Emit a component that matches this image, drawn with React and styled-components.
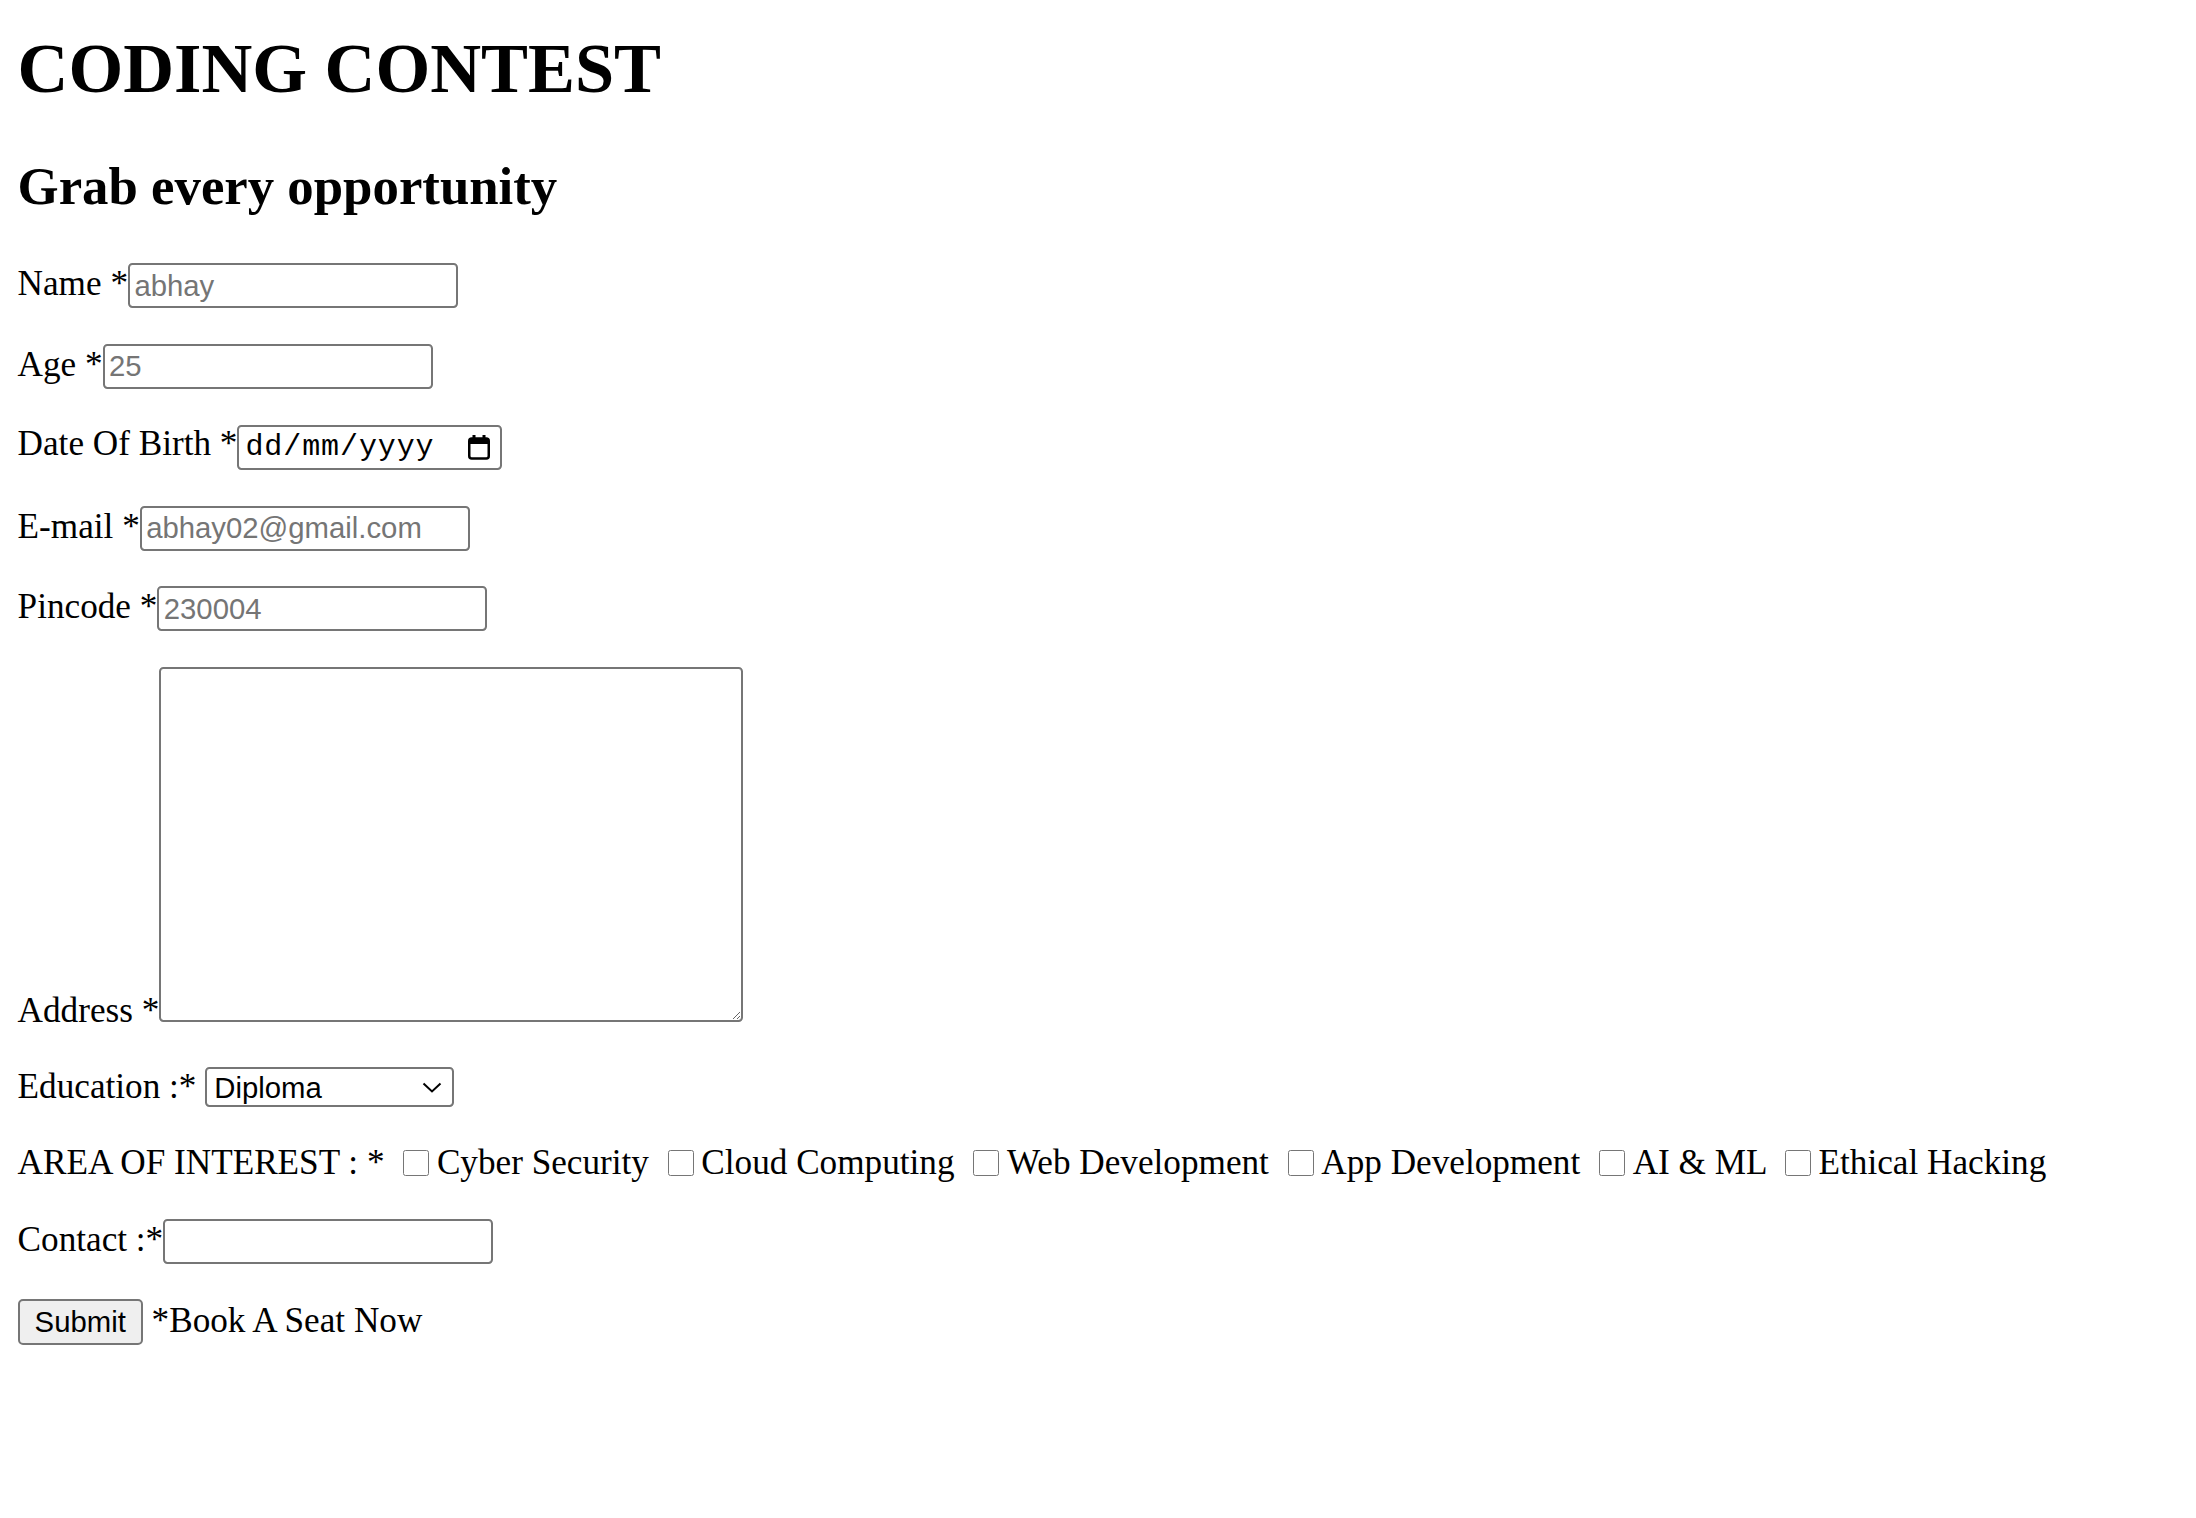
import React from "react";
import styled, { createGlobalStyle } from "styled-components";

const GlobalStyle = createGlobalStyle`
  body {
    margin: 0;
    background: #fff;
    color: #000;
    font-family: "Liberation Serif", "Times New Roman", serif;
    font-size: 35.2px;
  }
`;

const Page = styled.main`
  padding: 0 17.6px;
`;

const Title = styled.h1`
  font-size: 70.4px;
  font-weight: bold;
  margin: 27.5px 0 47.2px;
`;

const Subtitle = styled.h2`
  font-size: 52.8px;
  font-weight: bold;
  margin: 47.2px 0 47.5px;
`;

const Row = styled.p`
  margin: 35.8px 0;
`;

const fieldBase = `
  box-sizing: border-box;
  border: 2px solid #767676;
  border-radius: 4.4px;
  background: #fff;
  color: #000;
  font-family: "Liberation Sans", Arial, sans-serif;
  font-size: 29.3px;
`;

const TextInput = styled.input`
  ${fieldBase}
  width: ${(p) => p.$w || 330}px;
  padding: 3.4px 4.4px;
  margin: 0;
  &::placeholder {
    color: #757575;
  }
`;

const DateField = styled.span`
  ${fieldBase}
  display: inline-flex;
  align-items: center;
  justify-content: space-between;
  width: 265px;
  height: 45.3px;
  padding: 0 10px 0 6px;
  font-family: "Liberation Mono", "DejaVu Sans Mono", monospace;
  font-size: 30px;
  letter-spacing: 0.9px;
`;

const AddressBox = styled.textarea`
  ${fieldBase}
  width: 584px;
  height: 355px;
  margin: 0;
  padding: 4.4px;
  vertical-align: baseline;
`;

const SelectWrap = styled.span`
  position: relative;
  display: inline-block;
`;

const Select = styled.select`
  ${fieldBase}
  appearance: none;
  width: 249px;
  height: 40px;
  padding: 0 40px 0 7px;
  margin: 0;
`;

const Chevron = styled.svg`
  position: absolute;
  right: 12px;
  top: 50%;
  margin-top: -5px;
  pointer-events: none;
`;

const Check = styled.input.attrs({ type: "checkbox" })`
  width: 26px;
  height: 26px;
  margin: 6.6px 7.6px 6.6px 10px;
  vertical-align: -2px;
`;

const SubmitButton = styled.button`
  box-sizing: border-box;
  height: 46px;
  padding: 2.2px 15px;
  margin: 0;
  border: 2px solid #767676;
  border-radius: 5px;
  background: #efefef;
  color: #000;
  font-family: "Liberation Sans", Arial, sans-serif;
  font-size: 29.3px;
`;

const CalendarIcon = () => (
  <svg width="22" height="25" viewBox="0 0 22 25" aria-hidden="true">
    <rect x="4.5" y="0" width="3" height="5" fill="#000" />
    <rect x="14.5" y="0" width="3" height="5" fill="#000" />
    <rect x="1.25" y="3.5" width="19.5" height="20" rx="2.5" fill="none" stroke="#000" strokeWidth="2.5" />
    <rect x="1.25" y="3.5" width="19.5" height="5.5" fill="#000" />
  </svg>
);

const interests = [
  "Cyber Security",
  "Cloud Computing",
  "Web Development",
  "App Development",
  "AI & ML",
  "Ethical Hacking",
];

const App = () => {
  return (
    <Page>
      <GlobalStyle />
      <Title>CODING CONTEST</Title>
      <Subtitle>Grab every opportunity</Subtitle>
      <form onSubmit={(e) => e.preventDefault()}>
        <Row>
          Name *<TextInput type="text" placeholder="abhay" />
        </Row>
        <Row>
          Age *<TextInput type="text" placeholder="25" />
        </Row>
        <Row>
          Date Of Birth *
          <DateField>
            <span>dd/mm/yyyy</span>
            <CalendarIcon />
          </DateField>
        </Row>
        <Row>
          E-mail *<TextInput type="email" placeholder="abhay02@gmail.com" $w={330} />
        </Row>
        <Row>
          Pincode *<TextInput type="text" placeholder="230004" />
        </Row>
        <Row>
          Address *<AddressBox />
        </Row>
        <Row>
          Education :*{" "}
          <SelectWrap>
            <Select defaultValue="Diploma">
              <option>Diploma</option>
              <option>Graduation</option>
              <option>Post Graduation</option>
            </Select>
            <Chevron width="20" height="11" viewBox="0 0 20 11" aria-hidden="true">
              <path d="M1.5 1.5 L10 9.5 L18.5 1.5" fill="none" stroke="#000" strokeWidth="2" />
            </Chevron>
          </SelectWrap>
        </Row>
        <Row>
          AREA OF INTEREST : *{" "}
          {interests.map((item) => (
            <React.Fragment key={item}>
              <Check />
              {item}{" "}
            </React.Fragment>
          ))}
        </Row>
        <Row>
          Contact :*<TextInput type="tel" />
        </Row>
        <Row>
          <SubmitButton type="submit">Submit</SubmitButton> *Book A Seat Now
        </Row>
      </form>
    </Page>
  );
};

export default App;
